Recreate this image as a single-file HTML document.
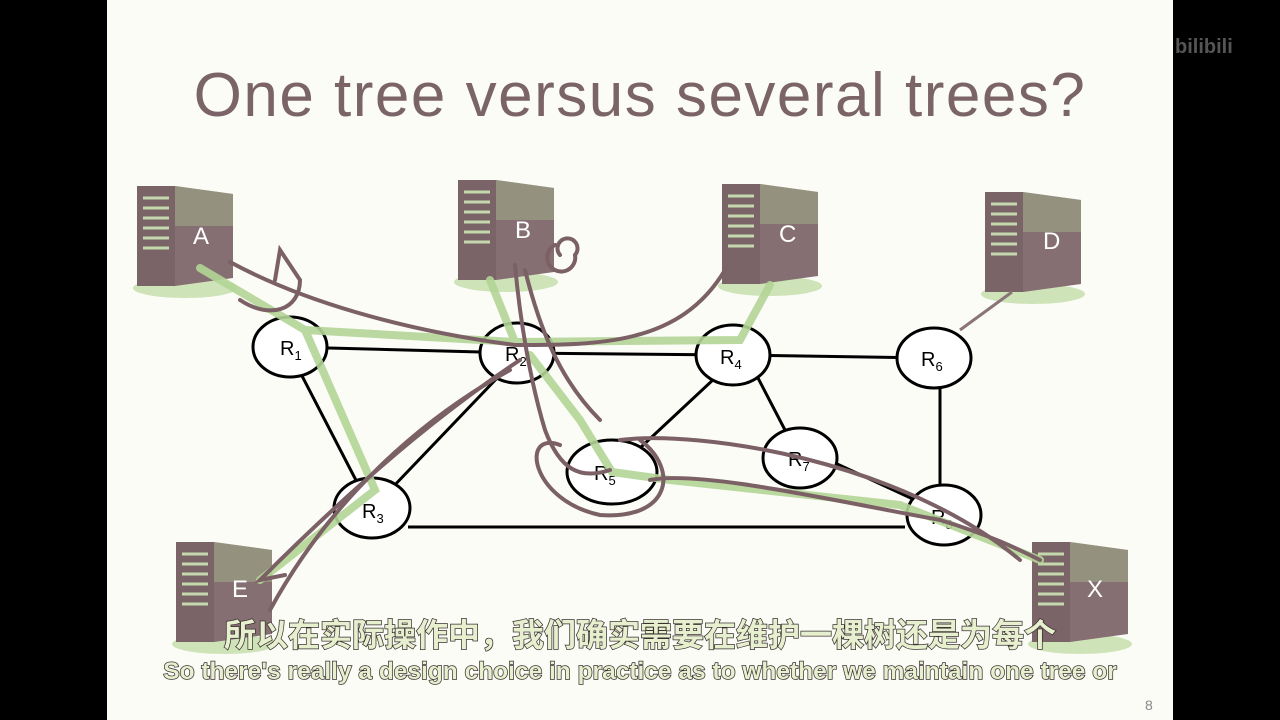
<!DOCTYPE html>
<html><head><meta charset="utf-8"><style>
body{margin:0;width:1280px;height:720px;background:#000;overflow:hidden;position:relative;font-family:"Liberation Sans",sans-serif}
#s{position:absolute;left:107px;top:0;width:1066px;height:720px;background:#fbfcf6}
h1{position:absolute;left:0;width:1280px;top:60px;margin:0;text-align:center;font-weight:normal;font-size:62px;color:#7b6468;letter-spacing:1.5px}
.sub{position:absolute;left:0;width:1280px;text-align:center;color:#e6f0cf;font-weight:bold;-webkit-text-stroke:1.5px #3b3030;paint-order:stroke fill}
.pg{position:absolute;left:1145px;top:697px;font-size:14px;color:#888}
.bl{position:absolute;left:1175px;top:36px;color:#555;font-weight:bold;font-size:20px}
</style></head><body>
<div id="s"></div>
<h1>One tree versus several trees?</h1>
<svg width="1280" height="720" style="position:absolute;left:0;top:0">
<defs><g id="srv"><ellipse cx="48" cy="102" rx="52" ry="10" fill="#cfe3b8"/><rect x="0" y="0" width="38" height="100" fill="#7b6468"/><polygon points="38,0 96,8 96,92 38,100" fill="#856f73"/><polygon points="38,0 96,8 96,40 38,40" fill="#a3b58c" opacity=".5"/><g stroke="#c4d8ae" stroke-width="3"><line x1="6" y1="12" x2="32" y2="12"/><line x1="6" y1="22" x2="32" y2="22"/><line x1="6" y1="32" x2="32" y2="32"/><line x1="6" y1="42" x2="32" y2="42"/><line x1="6" y1="52" x2="32" y2="52"/><line x1="6" y1="62" x2="32" y2="62"/></g></g></defs>
<use href="#srv" x="137" y="186"/><use href="#srv" x="458" y="180"/><use href="#srv" x="722" y="184"/><use href="#srv" x="985" y="192"/><use href="#srv" x="176" y="542"/><use href="#srv" x="1032" y="542"/>
<g fill="#fff" font-size="24"><text x="193" y="244">A</text><text x="515" y="238">B</text><text x="779" y="242">C</text><text x="1043" y="249">D</text><text x="232" y="597">E</text><text x="1087" y="597">X</text></g>
<g stroke="#000" stroke-width="3" fill="none">
<line x1="290" y1="347" x2="517" y2="353"/><line x1="517" y1="353" x2="733" y2="355"/><line x1="733" y1="355" x2="934" y2="358"/><line x1="300" y1="372" x2="360" y2="488"/><line x1="500" y1="375" x2="390" y2="490"/><line x1="715" y1="378" x2="640" y2="448"/><line x1="758" y1="378" x2="785" y2="430"/><line x1="940" y1="383" x2="940" y2="490"/><line x1="835" y1="463" x2="915" y2="500"/><line x1="408" y1="527" x2="905" y2="527"/>
<line x1="960" y1="330" x2="1012" y2="292" stroke="#8a7478"/>
</g>
<g stroke="#000" stroke-width="3" fill="#fff">
<ellipse cx="290" cy="347" rx="37" ry="30"/><ellipse cx="517" cy="353" rx="37" ry="30"/><ellipse cx="733" cy="355" rx="37" ry="30"/><ellipse cx="934" cy="358" rx="37" ry="30"/><ellipse cx="800" cy="458" rx="37" ry="30"/><ellipse cx="612" cy="472" rx="45" ry="32"/><ellipse cx="372" cy="508" rx="38" ry="30"/><ellipse cx="944" cy="515" rx="37" ry="30"/>
</g>
<g font-size="20" fill="#000"><text x="280" y="355">R<tspan font-size="13" dy="5">1</tspan></text><text x="505" y="361">R<tspan font-size="13" dy="5">2</tspan></text><text x="720" y="364">R<tspan font-size="13" dy="5">4</tspan></text><text x="921" y="366">R<tspan font-size="13" dy="5">6</tspan></text><text x="788" y="466">R<tspan font-size="13" dy="5">7</tspan></text><text x="594" y="480">R<tspan font-size="13" dy="5">5</tspan></text><text x="362" y="518">R<tspan font-size="13" dy="5">3</tspan></text><text x="931" y="524">R<tspan font-size="13" dy="5">8</tspan></text></g>
<g stroke="#b3d596" stroke-width="8" fill="none" stroke-linecap="round" opacity=".9">
<path d="M200 268 L305 330 L515 342 L740 340 L770 285"/><path d="M305 330 L375 490 L260 580"/><path d="M515 342 L490 280"/><path d="M530 355 L580 420 L612 472 L670 480 L900 505 L1040 560"/>
</g>
<g stroke="#7b6066" stroke-width="4" fill="none" stroke-linecap="round">
<path d="M230 262 C300 300 400 330 515 345 C600 345 680 345 725 270"/><path d="M240 300 C270 320 300 310 300 280 L280 250 L275 280"/>
<path d="M515 265 C520 320 530 380 545 430 C560 470 580 480 610 470"/><path d="M525 270 C540 330 560 380 600 420"/>
<path d="M520 360 C460 400 380 460 260 580 L285 575"/><path d="M510 370 C420 420 330 500 270 610"/>
<path d="M555 245 a14 14 0 1 0 20 10 a10 10 0 1 0 -15 0"/>
<path d="M560 445 C520 430 530 500 600 515 C670 520 680 470 640 440"/>
<path d="M650 480 C700 470 830 500 940 520 C990 535 1020 550 1040 560"/><path d="M620 440 C700 430 900 460 1020 560"/>
</g>
</svg>
<div class="bl">bilibili</div>
<div class="sub" style="top:610px;font-size:32px;font-family:'Liberation Sans','Noto Sans CJK SC',sans-serif">所以在实际操作中，我们确实需要在维护一棵树还是为每个</div>
<div class="sub" style="top:658px;font-size:24.5px">So there's really a design choice in practice as to whether we maintain one tree or</div>
<div class="pg">8</div>
</body></html>
